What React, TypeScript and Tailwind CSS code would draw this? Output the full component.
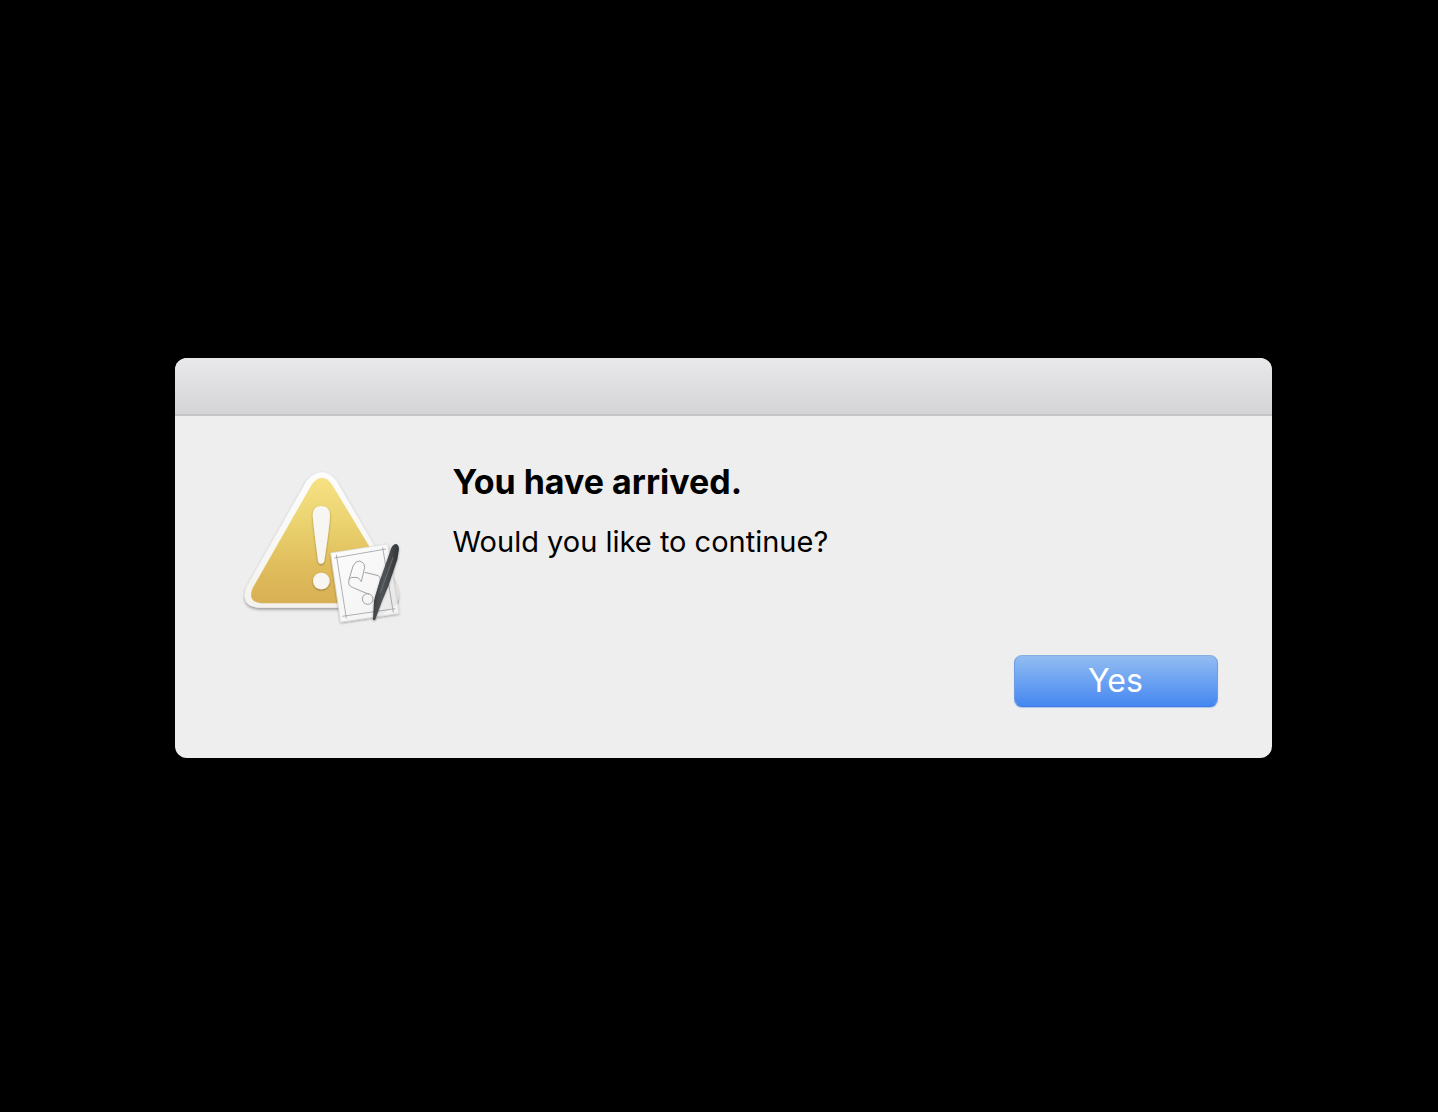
function AlertIcon() {
  return (
    <svg viewBox="0 0 540 540" className="size-[180px] shrink-0" role="img" aria-label="Warning">
      <defs>
        <linearGradient id="gold" x1="0" y1="0" x2="0" y2="1">
          <stop offset="0" stopColor="#f6e184" />
          <stop offset="0.35" stopColor="#ebd370" />
          <stop offset="0.7" stopColor="#e0bd5c" />
          <stop offset="1" stopColor="#d8b055" />
        </linearGradient>
        <linearGradient id="rim" x1="0" y1="0" x2="0" y2="1">
          <stop offset="0" stopColor="#fdfdfd" />
          <stop offset="1" stopColor="#f3f2ee" />
        </linearGradient>
        <linearGradient id="sheet" x1="0" y1="0" x2="1" y2="1">
          <stop offset="0" stopColor="#fdfdfd" />
          <stop offset="1" stopColor="#f1f1f1" />
        </linearGradient>
        <linearGradient id="pen" x1="0" y1="0" x2="1" y2="0.3">
          <stop offset="0" stopColor="#2b2d2f" />
          <stop offset="0.5" stopColor="#505457" />
          <stop offset="1" stopColor="#2e3032" />
        </linearGradient>
        <filter id="shade" x="-10%" y="-10%" width="120%" height="125%">
          <feDropShadow dx="0" dy="5" stdDeviation="4" floodColor="#000" floodOpacity="0.38" />
        </filter>
        <filter id="soft" x="-20%" y="-20%" width="140%" height="140%">
          <feDropShadow dx="0" dy="3" stdDeviation="3" floodColor="#000" floodOpacity="0.35" />
        </filter>
      </defs>
      <path
        d="M215 62 Q259 12 303 60 L408 240 L484 376 Q508 441 446 443 H76 Q14 441 34 382 Z"
        fill="url(#rim)"
        filter="url(#shade)"
      />
      <path
        d="M230 74 Q260 34 290 72 L400 254 L470 380 Q484 428 444 430 H80 Q36 427 53 384 Z"
        fill="url(#gold)"
      />
      <g fill="#f7f6f2" filter="url(#soft)">
        <path d="M233 164 Q235 138 259 138 Q283 138 285 164 Q284 196 268 302 Q266 311 258 311 Q250 311 249 302 Q235 196 233 164 Z" />
        <circle cx="259" cy="363" r="25" />
      </g>
      <path
        d="M287 279 L458 252 L492 460 L317 486 Z"
        fill="url(#sheet)"
        stroke="#dededc"
        strokeWidth="2"
        filter="url(#soft)"
      />
      <g fill="none" stroke="#8b8d8f" strokeWidth="2">
        <path d="M298 294 L453 267 M304 284 L334 475 M443 262 L475 458 M322 469 L481 446" />
        <path
          stroke="#a0a2a4"
          strokeWidth="3"
          d="M342 359 L354 318 Q361 303 373 303 Q389 307 389 322 L379 365 Q373 352 360 352 Q345 350 342 359 Q338 378 352 382 L402 403 M389 337 L430 347 Q441 356 432 377 L420 414"
        />
        <circle cx="398" cy="417" r="16" stroke="#a0a2a4" strokeWidth="3" />
      </g>
      <path d="M430 472 L492 430 L490 390 L476 350 Z" fill="#000" opacity="0.04" />
      <path
        d="M466 272 Q472 251 484 252 Q494 256 491 274 L487 298 L461 376 L441 424 L420 481 L414 479 L417 422 L434 364 Z"
        fill="url(#pen)"
        filter="url(#soft)"
      />
      <path d="M474 292 L436 398" stroke="#6b6f72" strokeWidth="3" />
    </svg>
  );
}

export default function App() {
  return (
    <main className="flex min-h-screen items-center justify-center bg-black pt-1 pl-2 font-['Inter',sans-serif] text-black">
      <section
        role="alertdialog"
        aria-labelledby="alert-title"
        aria-describedby="alert-text"
        className="w-full max-w-[1097px] overflow-hidden rounded-xl bg-[#eeeeee]"
      >
        <header className="h-[58px] border-b-2 border-[#c4c3c5] bg-linear-to-b from-[#e9e8ea] to-[#d4d3d6]" />
        <div className="flex gap-[38px] px-[60px] pt-11">
          <AlertIcon />
          <div className="pt-0.5">
            <h1 id="alert-title" className="text-[34px] leading-10 font-bold">You have arrived.</h1>
            <p id="alert-text" className="pt-[22px] text-[29px] leading-9">Would you like to continue?</p>
          </div>
        </div>
        <footer className="flex justify-end px-[54px] pt-[15px] pb-[51px]">
          <button
            type="button"
            className="h-[52px] w-[204px] rounded-lg border border-t-[#86aede] border-x-[#6c9ee2] border-b-[#3f7ade] bg-linear-to-b from-[#92bcf1] to-[#4587f0] text-[32px] leading-10 text-white shadow-[0_1px_1px_#a9c4f2]"
          >
            Yes
          </button>
        </footer>
      </section>
    </main>
  );
}
